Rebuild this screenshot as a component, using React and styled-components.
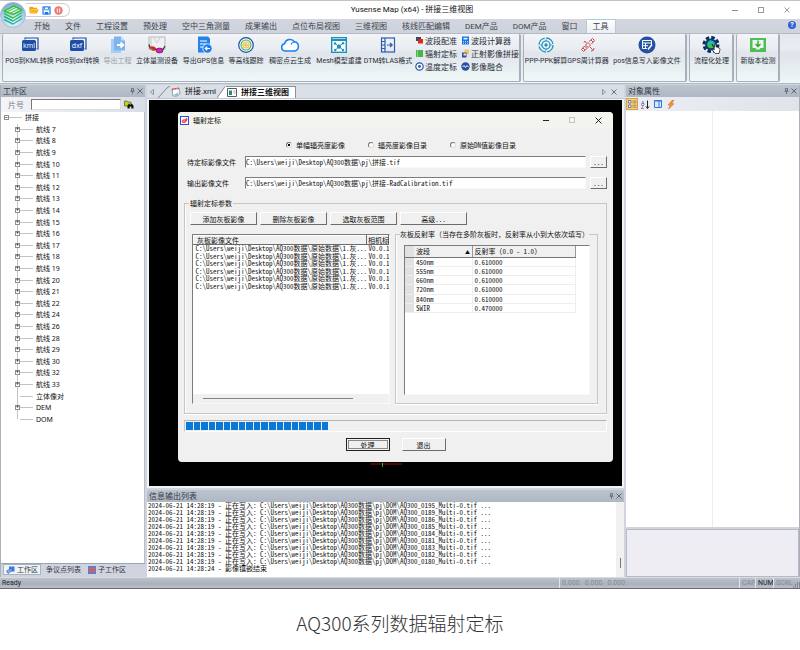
import React from "react";
import styled, { createGlobalStyle, css } from "styled-components";

const menus = [
  "开始", "文件", "工程设置", "预处理", "空中三角测量", "成果输出", "点位布局视图",
  "三维视图", "核线匹配编辑", "DEM产品", "DOM产品", "窗口", "工具",
];

const lines = [7, 8, 9, 10, 11, 12, 13, 14, 15, 16, 17, 18, 19, 20, 21, 22, 24, 26, 28, 29, 30, 32, 33];

const treeItems = [
  ...lines.map((n) => ({ name: `航线 ${n}`, open: true })),
  { name: "立体像对", open: false },
  { name: "DEM", open: true },
  { name: "DOM", open: false },
];

const logs = ["0195", "0189", "0186", "0185", "0184", "0181", "0183", "0182", "0180"];

const bands = [
  ["450nm", "0.610000"],
  ["555nm", "0.610000"],
  ["660nm", "0.610000"],
  ["720nm", "0.610000"],
  ["840nm", "0.610000"],
  ["SWIR", "0.470000"],
];

/* icons */

const Logo = () => (
  <svg width="26" height="26" viewBox="0 0 26 26">
    <defs>
      <radialGradient id="orb" cx="50%" cy="75%" r="70%">
        <stop offset="0" stopColor="#eef8ff" />
        <stop offset="0.7" stopColor="#a9cdea" />
        <stop offset="1" stopColor="#7fa9d0" />
      </radialGradient>
    </defs>
    <circle cx="13" cy="13" r="12.5" fill="url(#orb)" stroke="#a8bdd3" />
    <g fill="none" strokeWidth="1.4" strokeLinejoin="round">
      <path d="M4 17.500 13 22 22 16.500" stroke="#23b6a4" />
      <path d="M4 14.500 13 19 22 13.500" stroke="#22b573" />
      <path d="M4 11.500 13 16 22 10.500" stroke="#2fc14f" />
      <path d="M4 9 14 4 22 8 13 12.500Z" stroke="#33bf3f" fill="#e6f6ee" />
      <path d="M7.500 9.500 16 5.500M10.500 11 19 7" stroke="#33bf3f" strokeWidth="1" />
    </g>
  </svg>
);

const Folder = () => (
  <svg width="10" height="8" viewBox="0 0 10 8">
    <path d="M0.500 7.500V0.700H3.500L4.500 1.700H8V3H2.500Z" fill="#f2a100" />
    <path d="M2.500 3.300H9.800L8 7.600H0.800Z" fill="#ffb31a" />
  </svg>
);

const Save = () => (
  <svg width="9" height="9" viewBox="0 0 9 9">
    <path d="M1 1H8V8H1Z" fill="#fff" stroke="#1479e8" strokeWidth="1.200" />
    <path d="M2.500 1H6.500V3.800H2.500Z" fill="#fff" stroke="#1479e8" strokeWidth="0.800" />
    <path d="M2.800 6H6.200V8.500H2.800Z" fill="#1479e8" />
  </svg>
);

const Pause = () => (
  <svg width="9" height="9" viewBox="0 0 9 9">
    <circle cx="4.500" cy="4.500" r="4.200" fill="#ef7672" />
    <path d="M3.300 2.500V6.500M5.700 2.500V6.500" stroke="#fff" />
  </svg>
);

const FileTag = ({ text }) => (
  <svg width="18" height="18" viewBox="0 0 18 18">
    <path d="M4 3.500V2H17V13H15.500" fill="none" stroke="#1d4fa8" strokeWidth="1.200" />
    <rect x="1" y="4" width="14" height="11" rx="1.500" fill="#1d4fa8" />
    <text x="8" y="12" fontSize="7" fill="#fff" textAnchor="middle" fontFamily="Open Sans, sans-serif">
      {text}
    </text>
  </svg>
);

const ExportProject = () => (
  <svg width="18" height="18" viewBox="0 0 18 18">
    <path d="M2 3H12V17H2Z" fill="#a8cdf6" />
    <path d="M5 0.500H12L16 4.500V14.500H5Z" fill="#7fb4f0" />
    <path d="M12 0.500V4.500H16Z" fill="#c6defa" />
    <path d="M8 9H14M11.500 6.500 14.200 9 11.500 11.500" stroke="#fff" strokeWidth="1.800" fill="none" />
  </svg>
);

const Stereo = () => (
  <svg width="18" height="18" viewBox="0 0 18 18">
    <rect x="1" y="1" width="16" height="12" fill="#eef0f2" stroke="#b5b8bd" />
    <path d="M3 2V10M6 2 9 7 12 2" stroke="#c6c9cf" fill="none" />
    <path d="M1 8.500 2 12 9 13.500 15 13.500 17 10" stroke="#333" fill="none" strokeWidth="1.200" />
    <ellipse cx="5" cy="12.500" rx="3.200" ry="2" fill="#e41b23" transform="rotate(18 5 12)" />
    <ellipse cx="11.500" cy="14.500" rx="3.500" ry="2.500" fill="#e01bc0" stroke="#222" strokeWidth="0.600" />
    <path d="M2 11.500 5 14.500" stroke="#36c46a" />
  </svg>
);

const ExportGps = () => (
  <svg width="18" height="18" viewBox="0 0 18 18">
    <path d="M3 0.500H13L15 2.500V16.500H3Z" fill="#2284ea" />
    <path d="M5 5H12M5 8H11M5 11H8" stroke="#fff" />
    <circle cx="12.500" cy="12.500" r="4.700" fill="#1d7ce6" stroke="#fff" strokeWidth="0.800" />
    <path d="M15 12.500H10.500M12.200 10.700 10.300 12.500 12.200 14.300" stroke="#fff" fill="none" strokeWidth="1.200" />
  </svg>
);

const Contour = () => (
  <svg width="18" height="18" viewBox="0 0 18 18" fill="none">
    <circle cx="9" cy="9" r="7.300" fill="#f4f8f4" stroke="#1d4fa8" strokeWidth="1.200" />
    <circle cx="9" cy="9" r="5" stroke="#40b86b" strokeWidth="1.100" />
    <circle cx="9" cy="9" r="3" stroke="#f1c232" strokeWidth="1.100" />
    <circle cx="9" cy="9" r="1.200" stroke="#e0a339" />
  </svg>
);

const Cloud = () => (
  <svg width="20" height="18" viewBox="0 0 20 18">
    <path
      d="M5 15A3.700 3.700 0 0 1 4.600 7.700 5.500 5.500 0 0 1 14.500 5.800 4.700 4.700 0 0 1 14.800 15Z"
      fill="#fff" stroke="#1683f0" strokeWidth="1.500"
    />
    <path d="M11 8.500A4 4 0 0 1 14.500 6" fill="none" stroke="#1683f0" strokeWidth="1.100" />
  </svg>
);

const Mesh = () => (
  <svg width="18" height="18" viewBox="0 0 18 18">
    <rect x="1.700" y="1.700" width="14.600" height="14.600" fill="#fff" stroke="#1b93b8" strokeWidth="1.400" />
    <path d="M1.500 4H16.500" stroke="#1b93b8" strokeWidth="2" />
    <path d="M9 10.500 5 7.500M9 10.500 13 7M9 10.500 5.500 14M9 10.500 13 14" stroke="#1b93b8" />
    <path d="M9 8.200 11 9.500V11.800L9 13 7 11.800V9.500Z" fill="#1b93b8" />
    <g fill="#1b93b8">
      <circle cx="5" cy="7.500" r="1.200" />
      <circle cx="13" cy="7.200" r="1.200" />
      <circle cx="5.200" cy="14" r="1.200" />
      <circle cx="13" cy="14" r="1.200" />
    </g>
  </svg>
);

const Dtm = () => (
  <svg width="18" height="18" viewBox="0 0 18 18" fill="none" stroke="#2c5cb0" strokeWidth="1.200">
    <rect x="2.500" y="2" width="13" height="14" />
    <path d="M6 2V16M2.500 5.500H6M2.500 9H6M2.500 12.500H6M8 9H13M11 7 13.200 9 11 11" />
  </svg>
);

const SmallIcon = ({ kind }) => (
  <svg width="9" height="9" viewBox="0 0 9 9">
    {kind === "align" && (
      <>
        <path d="M1 1H6V5H1Z" fill="#3a4a5a" />
        <path d="M3 3H8V7.500H3Z" fill="#e0271b" />
      </>
    )}
    {kind === "radiance" && (
      <>
        <path d="M1 1H8V8H1Z" fill="#45b649" />
        <path d="M2.500 1V8" stroke="#a6dba8" strokeWidth="0.700" />
      </>
    )}
    {kind === "temp" && (
      <>
        <circle cx="4.500" cy="4.500" r="3.700" fill="#fff" stroke="#2358a8" strokeWidth="1.200" />
        <circle cx="4.500" cy="4.500" r="1.400" fill="#2358a8" />
      </>
    )}
    {kind === "calc" && (
      <>
        <path d="M1 0.500H8V8.500H1Z" fill="#1772e0" />
        <path d="M2.500 1.800H6.500V3.500H2.500Z" fill="#e9f3ff" />
        <path d="M2 5.500H7M2 7.200H7" stroke="#bfe0ff" strokeDasharray="1 1" />
      </>
    )}
    {kind === "ortho" && (
      <>
        <path d="M3.500 0.500H8V5H3.500Z" fill="#f0c75a" />
        <path d="M1 3.500H5.500V8.500H1Z" fill="#31518c" />
        <path d="M2.500 4.500H5V6.500H2.500Z" fill="#dfe9f8" />
      </>
    )}
    {kind === "fusion" && (
      <>
        <circle cx="4.500" cy="4.500" r="4.200" fill="#2353a2" />
        <path d="M1.500 5 3 3.500 4.500 5.500 6 3.500 7.500 5" stroke="#fff" fill="none" />
      </>
    )}
  </svg>
);

const Ppk = () => (
  <svg width="18" height="18" viewBox="0 0 18 18" fill="none" stroke="#1a91c2">
    <circle cx="9" cy="9" r="7" strokeWidth="1.300" strokeDasharray="9.500 1.500" />
    <circle cx="9" cy="9" r="4" strokeWidth="1.200" />
    <circle cx="9" cy="9" r="1.200" fill="#1a91c2" />
    <path d="M9 3.500V5M9 13V14.500M3.500 9H5M13 9H14.500" />
  </svg>
);

const Satellite = () => (
  <svg width="18" height="18" viewBox="0 0 18 18" fill="none" stroke="#c8323a" strokeWidth="0.900">
    <path d="M6.500 9 9 6.500 11.500 9 9 11.500Z" />
    <path d="M10 5.500 13.500 2.500 15.500 4.500 12.500 8M2.500 13.500 5.500 10 8 12.500 4.500 15.500Z" />
    <path d="M12 4 14 6M4 12 6 14M5.500 5 7.500 7M5 6.500 6.500 5M11 11 13.500 13.500M12 15A3 3 0 0 0 15 12" />
  </svg>
);

const PosEdit = () => (
  <svg width="18" height="18" viewBox="0 0 18 18">
    <circle cx="9" cy="9" r="8.500" fill="#2352a5" />
    <path d="M4.500 4.500H13.500V9M4.500 4.500V12.500H9M4.500 7H13.500M4.500 9.700H10M7.500 7V12.500" stroke="#fff" fill="none" />
    <path d="M10 13.500 14 8.500" stroke="#fff" strokeWidth="1.500" />
  </svg>
);

const Process = () => (
  <svg width="20" height="18" viewBox="0 0 20 18">
    <circle cx="9" cy="8.500" r="7" fill="none" stroke="#0b2d5c" strokeWidth="3" strokeDasharray="3.500 2" />
    <circle cx="9" cy="8.500" r="6" fill="#0f3d73" />
    <circle cx="9" cy="8.500" r="3.800" fill="#3ac163" />
    <path d="M7 5.500A3.500 3.500 0 0 1 12 9" stroke="#1bb1e6" strokeWidth="1.600" fill="none" />
    <path
      d="M10 8 12.500 11.500V8.500Q13.500 7.500 14 9V11Q16 10.500 16.500 12 18 12 18 13.500L17 17.500H13L10.500 14Q10.500 12.500 12.500 13.500Z"
      fill="#fff" stroke="#111" strokeWidth="0.700"
    />
  </svg>
);

const Update = () => (
  <svg width="18" height="18" viewBox="0 0 18 18">
    <rect x="1" y="2" width="16" height="14" fill="#4fbf54" />
    <path d="M3.500 4H14.500V12H11.500L10.500 13.500H7.500L6.500 12H3.500Z" fill="#e9f8e8" />
    <path d="M9 4.500V10M6.500 8 9 10.500 11.500 8" stroke="#35a53c" strokeWidth="1.400" fill="none" />
  </svg>
);

const Pin = () => (
  <svg width="5" height="6" viewBox="0 0 5 6" fill="none" stroke="#5c6470" strokeWidth="0.800">
    <path d="M1.500 0.500H3.500V3H1.500ZM0.500 3.300H4.500M2.500 3.500V6" />
  </svg>
);

const Cross = ({ size = 6, color = "#4b525e" }) => (
  <svg width={size} height={size} viewBox="0 0 6 6">
    <path d="M0.500 0.500 5.500 5.500M5.500 0.500 0.500 5.500" stroke={color} strokeWidth="0.800" />
  </svg>
);

const Find = () => (
  <svg width="10" height="9" viewBox="0 0 10 9">
    <path d="M0.500 1H3L4 2H7V6H0.500Z" fill="#c7cf22" stroke="#454a12" strokeWidth="0.600" />
    <path d="M3.500 8.500V5.500L5 3.500 6.300 5 7.500 3.500 9.500 5.500V8.500H7.300V6.500H5.700V8.500Z" fill="#111" />
  </svg>
);

const XmlIcon = () => (
  <svg width="10" height="10" viewBox="0 0 10 10">
    <path d="M1 2 8 1 9 7 6 9H2Z" fill="#fff" stroke="#6b7c93" strokeWidth="0.700" />
    <path d="M1 2.500 8 1.500" stroke="#e5443b" strokeWidth="1.600" strokeDasharray="1 0.600" />
    <path d="M2.500 8 8 5 6 9Z" fill="#88b7dd" />
  </svg>
);

const ViewIcon = () => (
  <svg width="10" height="9" viewBox="0 0 10 9">
    <path d="M0.500 0.500H9.500V8.500H0.500Z" fill="#fff" stroke="#4f5f70" />
    <path d="M2 2.500H5V7H2Z" fill="#2d8a6b" />
    <path d="M6.500 3H8.500M6.500 5H8.500" stroke="#9aa" />
  </svg>
);

const DialogIcon = () => (
  <svg width="9" height="9" viewBox="0 0 9 9">
    <rect x="0.500" y="0.500" width="8" height="8" fill="#fff" stroke="#3a48d8" />
    <path d="M1.500 5.500Q3 2.500 5 3.500L7 1.500 7.500 4 5.500 6.500Q3 8 1.500 5.500Z" fill="#ee3f45" />
    <path d="M3 5.500 5 4.800" stroke="#fff" strokeWidth="0.700" />
  </svg>
);

const Cells = ({ color, line }) => (
  <svg width="8" height="8" viewBox="0 0 8 8">
    <rect width="8" height="8" fill={color} />
    <path d="M0 2.600H8M0 5.300H8M2.600 0V8M5.300 0V8" stroke={line} strokeWidth="0.900" />
  </svg>
);

const Categories = () => (
  <svg width="9" height="8" viewBox="0 0 9 8">
    <path d="M0.500 0.500H3V3H0.500ZM0.500 5H3V7.500H0.500Z" fill="#fff" stroke="#4a5f93" strokeWidth="0.800" />
    <path d="M4.500 1H8.500M4.500 2.800H8.500M4.500 5.300H8.500M4.500 7.200H8.500" stroke="#8a7348" strokeWidth="0.800" />
  </svg>
);

const WorkIcon = () => (
  <svg width="9" height="8" viewBox="0 0 9 8">
    <path d="M3 0.500H8.500V5.500H3Z" fill="#3d7ce0" />
    <path d="M0.500 5 5 2.500 6.500 4 2 7.500Z" fill="#8fb2ec" stroke="#2b4f9a" strokeWidth="0.600" />
  </svg>
);

const tools = [
  { label: "POS到KML转换", icon: <FileTag text="kml" />, width: 49 },
  { label: "POS到dxf转换", icon: <FileTag text="dxf" />, width: 47 },
  { label: "导出工程", icon: <ExportProject />, width: 33, dim: true },
  { label: "立体量测设备", icon: <Stereo />, width: 46 },
  { label: "导出GPS信息", icon: <ExportGps />, width: 47 },
  { label: "等高线跟踪", icon: <Contour />, width: 38 },
  { label: "稠密点云生成", icon: <Cloud />, width: 50 },
  { label: "Mesh模型重建", icon: <Mesh />, width: 48 },
  { label: "DTM转LAS格式", icon: <Dtm />, width: 50 },
];

const smallTools = [
  ["波段配准", "align"],
  ["波段计算器", "calc"],
  ["辐射定标", "radiance"],
  ["正射影像拼接", "ortho"],
  ["温度定标", "temp"],
  ["影像融合", "fusion"],
];

const Tool = ({ label, icon, width, dim }) => (
  <ToolButton $width={width} $dim={dim}>
    {icon}
    <span>{label}</span>
  </ToolButton>
);

const Ribbon = () => (
  <RibbonBar>
    <RibbonPanel>
      {tools.map((t) => (
        <Tool key={t.label} {...t} />
      ))}
      <SmallTools>
        {smallTools.map(([label, kind]) => (
          <SmallTool key={label}>
            <SmallIcon kind={kind} />
            {label}
          </SmallTool>
        ))}
      </SmallTools>
    </RibbonPanel>
    <RibbonPanel>
      <Tool label="PPP-PPK解算" icon={<Ppk />} width={42} />
      <Tool label="GPS周计算器" icon={<Satellite />} width={42} />
      <Tool label="pos信息写入影像文件" icon={<PosEdit />} width={76} />
    </RibbonPanel>
    <RibbonPanel>
      <Tool label="流程化处理" icon={<Process />} width={41} />
    </RibbonPanel>
    <RibbonPanel>
      <Tool label="新版本检测" icon={<Update />} width={40} />
    </RibbonPanel>
  </RibbonBar>
);

const PanelHead = ({ title }) => (
  <PanelTitle>
    <h2>{title}</h2>
    <IconButton aria-label="固定"><Pin /></IconButton>
    <IconButton aria-label="关闭"><Cross /></IconButton>
  </PanelTitle>
);

const Workspace = () => (
  <Side>
    <PanelHead title="工作区" />
    <SearchRow>
      <label htmlFor="sheet">片号</label>
      <input id="sheet" />
      <IconButton aria-label="查找"><Find /></IconButton>
    </SearchRow>
    <TreeBox>
      <Tree>
        <Root>
          <Toggle aria-label="折叠">−</Toggle>
          <Dots />
          拼接
        </Root>
        {treeItems.map((item) => (
          <Node key={item.name}>
            {item.open ? <Toggle aria-label="展开">+</Toggle> : <Stub />}
            <Dots />
            {item.name}
          </Node>
        ))}
      </Tree>
    </TreeBox>
    <SideTabs>
      <SideTab $active><WorkIcon />工作区</SideTab>
      <SideTab>争议点列表</SideTab>
      <SideTab><Cells color="#4f7fd6" line="#ee5a4f" />子工作区</SideTab>
    </SideTabs>
  </Side>
);

const plate = "C:\\Users\\weiji\\Desktop\\AQ300数据\\原始数据\\1.灰...";

const CalibrationDialog = () => (
  <Dialog role="dialog" aria-labelledby="dialog-title">
    <DialogBar>
      <DialogIcon />
      <h3 id="dialog-title">辐射定标</h3>
      <WinButton aria-label="最小化">
        <svg width="7" height="7" viewBox="0 0 7 7"><path d="M0 3.500H6" stroke="#222" /></svg>
      </WinButton>
      <WinButton aria-label="最大化" disabled>
        <svg width="7" height="7" viewBox="0 0 7 7"><rect x="0.500" y="0.500" width="5" height="5" fill="none" stroke="#c4c4c0" /></svg>
      </WinButton>
      <WinButton aria-label="关闭"><Cross size={7} color="#111" /></WinButton>
    </DialogBar>
    <DialogBody>
      <Radios>
        <label><input type="radio" name="mode" defaultChecked />单幅辐亮度影像</label>
        <label><input type="radio" name="mode" />辐亮度影像目录</label>
        <label><input type="radio" name="mode" />原始DN值影像目录</label>
      </Radios>
      <Field>
        <label htmlFor="source">待定标影像文件</label>
        <input id="source" defaultValue={"C:\\Users\\weiji\\Desktop\\AQ300数据\\pj\\拼接.tif"} />
        <Button>...</Button>
      </Field>
      <Field>
        <label htmlFor="target">输出影像文件</label>
        <input id="target" defaultValue={"C:\\Users\\weiji\\Desktop\\AQ300数据\\pj\\拼接-RadCalibration.tif"} />
        <Button>...</Button>
      </Field>
      <Group>
        <legend>辐射定标参数</legend>
        <Actions>
          <Button>添加灰板影像</Button>
          <Button>删除灰板影像</Button>
          <Button>选取灰板范围</Button>
          <Button>高级...</Button>
        </Actions>
        <Columns>
          <ListBox>
            <PlateTable>
              <thead>
                <tr><th>灰板影像文件</th><th>相机标</th></tr>
              </thead>
              <tbody>
                {bands.map(([band]) => (
                  <tr key={band}><td>{plate}</td><td>V0.0.1</td></tr>
                ))}
              </tbody>
            </PlateTable>
            <ScrollX />
          </ListBox>
          <InnerGroup>
            <legend>灰板反射率（当存在多阶灰板时，反射率从小到大依次填写）</legend>
            <BandBox>
              <BandTable>
                <thead>
                  <tr>
                    <th />
                    <th><span>波段</span><i>▲</i></th>
                    <th>反射率 (0.0 - 1.0)</th>
                  </tr>
                </thead>
                <tbody>
                  {bands.map(([band, value]) => (
                    <tr key={band}><td /><td>{band}</td><td>{value}</td></tr>
                  ))}
                </tbody>
              </BandTable>
            </BandBox>
          </InnerGroup>
        </Columns>
      </Group>
      <Progress role="progressbar" aria-valuenow={34} aria-valuemin={0} aria-valuemax={100}>
        <Blocks style={{ width: "34%" }}>
          {Array.from({ length: 19 }, (_, i) => <span key={i} />)}
        </Blocks>
      </Progress>
      <DialogFooter>
        <Button $primary>处理</Button>
        <Button>退出</Button>
      </DialogFooter>
    </DialogBody>
  </Dialog>
);

const App = () => {
  return (
    <Page>
      <GlobalStyle />
      <Window>
        <TitleBar>
          <Orb><Logo /></Orb>
          <Quick>
            <IconButton aria-label="打开"><Folder /></IconButton>
            <IconButton aria-label="保存"><Save /></IconButton>
            <IconButton aria-label="暂停"><Pause /></IconButton>
          </Quick>
          <h1>Yusense Map (x64) - 拼接三维视图</h1>
          <WinButtons>
            <WinButton aria-label="最小化">
              <svg width="7" height="7" viewBox="0 0 7 7"><path d="M0 3.500H6" stroke="#888" /></svg>
            </WinButton>
            <WinButton aria-label="最大化">
              <svg width="7" height="7" viewBox="0 0 7 7"><rect x="0.500" y="0.500" width="5" height="5" fill="none" stroke="#999" /></svg>
            </WinButton>
            <WinButton aria-label="关闭"><Cross color="#888" /></WinButton>
          </WinButtons>
        </TitleBar>
        <MenuBar>
          {menus.map((m) => (
            <MenuTab key={m} $active={m === "工具"}>{m}</MenuTab>
          ))}
          <Help aria-label="帮助">?</Help>
        </MenuBar>
        <Ribbon />
        <Main>
          <Workspace />
          <Center>
            <DocTabs>
              <IconButton aria-label="上一个">
                <svg width="4" height="6" viewBox="0 0 4 6"><path d="M3.500 0.500V5.500L0.500 3Z" fill="none" stroke="#777" strokeWidth="0.700" /></svg>
              </IconButton>
              <svg width="12" height="12" viewBox="0 0 12 12"><path d="M0 12 9 2Q10 0.500 12 0.500" fill="none" stroke="#7f8793" /></svg>
              <DocTab><XmlIcon />拼接.xml</DocTab>
              <svg width="9" height="12" viewBox="0 0 9 12"><path d="M0 12 8 0.500H9V12Z" fill="#fff" /><path d="M0 12 8 0.500" stroke="#7f8793" /></svg>
              <DocTab $active><ViewIcon />拼接三维视图</DocTab>
              <Spacer />
              <IconButton aria-label="下一个">
                <svg width="4" height="6" viewBox="0 0 4 6"><path d="M0.500 0.500V5.500L3.500 3Z" fill="none" stroke="#777" strokeWidth="0.700" /></svg>
              </IconButton>
              <IconButton aria-label="关闭"><Cross /></IconButton>
            </DocTabs>
            <Canvas>
              <CalibrationDialog />
              <Axis width="32" height="5" viewBox="0 0 32 5">
                <path d="M0 1H32" stroke="#8d1010" />
                <path d="M12.500 0V4" stroke="#19c32a" />
              </Axis>
            </Canvas>
            <Log>
              <PanelHead title="信息输出列表" />
              <LogBody>
                <LogLines>
                  {logs.map((n) => (
                    <li key={n}>
                      {`2024-06-21 14:28:19 - 正在写入: C:\\Users\\weiji\\Desktop\\AQ300数据\\pj\\DOM\\AQ300_${n}_Multi-0.tif ...`}
                    </li>
                  ))}
                  <li>2024-06-21 14:28:24 - 影像镶嵌结束</li>
                </LogLines>
                <ScrollY />
              </LogBody>
            </Log>
          </Center>
          <Properties>
            <PanelHead title="对象属性" />
            <PropTools>
              <PropButton aria-label="分类" $active><Categories /></PropButton>
              <PropButton aria-label="排序">
                <svg width="9" height="9" viewBox="0 0 9 9">
                  <text x="0" y="4.500" fontSize="5" fill="#2244cc" fontFamily="Liberation Sans, sans-serif">A</text>
                  <text x="0" y="9" fontSize="5" fill="#aa2222" fontFamily="Liberation Sans, sans-serif">Z</text>
                  <path d="M6.500 0.500V8M5 6.500 6.500 8.500 8 6.500" stroke="#222" fill="none" />
                </svg>
              </PropButton>
              <PropButton aria-label="页面">
                <svg width="8" height="8" viewBox="0 0 8 8">
                  <path d="M0.500 0.500H7.500V7.500H0.500Z" fill="#dce9fb" stroke="#3b73cf" />
                  <path d="M0 1H8M5 1V8" stroke="#3b73cf" />
                </svg>
              </PropButton>
              <PropButton aria-label="事件">
                <svg width="8" height="9" viewBox="0 0 8 9"><path d="M5.500 0 1 5H3.500L1.500 9 7 3.700H4.500L7 0Z" fill="#f5a21b" stroke="#c84f12" strokeWidth="0.500" /></svg>
              </PropButton>
            </PropTools>
            <PropGrid><span /><span /></PropGrid>
            <PropHint />
          </Properties>
        </Main>
        <StatusBar>
          <StatusText>Ready</StatusText>
          <StatusCell $width={180}>0.000&nbsp;&nbsp;&nbsp;0.000&nbsp;&nbsp;&nbsp;0.000</StatusCell>
          <StatusCell $width={16}>CAP</StatusCell>
          <StatusCell $width={18} $on>NUM</StatusCell>
          <StatusCell $width={18}>SCRL</StatusCell>
          <svg width="9" height="9" viewBox="0 0 9 9">
            <path d="M2 8H9M4 6H9M6 4H9" stroke="#59606c" strokeDasharray="1 1" />
          </svg>
        </StatusBar>
      </Window>
      <Caption>AQ300系列数据辐射定标</Caption>
    </Page>
  );
};

export default App;

const uiFont = `"Noto Sans", "Noto Sans CJK SC", sans-serif`;
const narrowFont = `Roboto, "Noto Sans CJK SC", sans-serif`;
const monoFont = `"Noto Sans Mono CJK SC", "Liberation Mono", "Noto Sans CJK SC", monospace`;

const GlobalStyle = createGlobalStyle`
  * {
    box-sizing: border-box;
  }
  body {
    margin: 0;
    background: #fff;
    font-family: ${uiFont};
    color: #1c1f24;
  }
  button, input {
    font: inherit;
    color: inherit;
    margin: 0;
    padding: 0;
  }
  button {
    border: 0;
    background: none;
    white-space: nowrap;
  }
  h1, h2, h3, ul {
    margin: 0;
    padding: 0;
    font-size: inherit;
    font-weight: 400;
    list-style: none;
  }
  svg {
    display: block;
    flex: none;
  }
`;

const raised = css`
  background: #f0f0f0;
  border: 1px solid;
  border-color: #fff #6c6c6c #6c6c6c #fff;
`;

const sunken = css`
  background: #fff;
  border: 1px solid;
  border-color: #7c7c7c #f8f8f8 #f8f8f8 #7c7c7c;
`;

const Page = styled.div`
  min-height: 100vh;
  display: flex;
  flex-direction: column;
`;

const Window = styled.div`
  flex: 1;
  display: flex;
  flex-direction: column;
  background: #cfd4de;
  border-top: 1px solid #c4c4c4;
  border-bottom: 1px solid #6f6a70;
  font-size: 8px;
  line-height: 10px;
`;

const TitleBar = styled.header`
  position: relative;
  display: flex;
  align-items: center;
  height: 18px;
  background: #fff;
  h1 {
    flex: 1;
    padding-left: 32px;
    text-align: center;
    font-family: ${narrowFont};
    color: #111;
  }
`;

const Orb = styled.div`
  position: absolute;
  left: 0;
  top: 1px;
  z-index: 2;
`;

const Quick = styled.div`
  display: flex;
  align-items: center;
  gap: 3px;
  height: 14px;
  width: 44px;
  margin-left: 26px;
  padding-left: 3px;
  border: 1px solid #ccd0d6;
  border-left: 0;
  border-radius: 0 7px 7px 0;
`;

const IconButton = styled.button`
  display: flex;
  align-items: center;
  justify-content: center;
  min-width: 8px;
`;

const WinButtons = styled.div`
  display: flex;
`;

const WinButton = styled.button`
  display: flex;
  align-items: center;
  justify-content: center;
  width: 26px;
  height: 14px;
`;

const MenuBar = styled.nav`
  display: flex;
  gap: 3px;
  height: 14px;
  padding-left: 28px;
  background: linear-gradient(#d3d6de, #cdd2dc);
  color: #3c424c;
  font-family: ${narrowFont};
`;

const MenuTab = styled.button`
  padding: 0 6px;
  border: 1px solid transparent;
  border-width: 1px 0 0;
  ${(p) =>
    p.$active &&
    css`
      background: linear-gradient(#fff, #e9f0f3);
      border-color: #9fd0dc;
      box-shadow: 0 0 1px #7d8591;
    `}
`;

const Help = styled.button`
  width: 8px;
  height: 8px;
  margin: 2px 4px 0 auto;
  border-radius: 50%;
  background: #2d62d8;
  color: #fff;
  font-size: 7px;
  font-weight: 700;
  line-height: 8px;
`;

const RibbonBar = styled.div`
  display: flex;
  gap: 2px;
  height: 51px;
  padding: 0 2px 1px;
  border: 1px solid #b3bac3;
  border-width: 1px 0;
  background: linear-gradient(#e4e8ed, #e9edf1 30%, #dfe4ea 40%, #eff6f6);
`;

const RibbonPanel = styled.div`
  flex: none;
  display: flex;
  padding-left: 1px;
  border: 1px solid #a9afb8;
  border-width: 0 2px 1px 1px;
  border-radius: 2px;
  background: linear-gradient(#f3f5f8, #e9edf1 30%, #e0e5eb 42%, #f0f8f7);
  &:first-child {
    padding-left: 2px;
  }
`;

const ToolButton = styled.button`
  display: flex;
  flex-direction: column;
  align-items: center;
  gap: 2px;
  width: ${(p) => p.$width}px;
  padding-top: 2px;
  font-family: ${narrowFont};
  font-size: 7px;
  line-height: 10px;
  color: ${(p) => (p.$dim ? "#989da5" : "#2a2f37")};
`;

const SmallTools = styled.div`
  display: grid;
  grid-template-columns: 46px 58px;
  grid-auto-rows: 13px;
  padding: 1px 0 0 2px;
`;

const SmallTool = styled.button`
  display: flex;
  align-items: center;
  gap: 1px;
  height: 11px;
  color: #2a2f37;
`;

const Main = styled.main`
  flex: 1;
  display: grid;
  grid-template-columns: 145px minmax(0, 1fr) 174px;
  gap: 2px;
  padding-top: 1px;
`;

const Side = styled.section`
  display: flex;
  flex-direction: column;
  border-left: 1px solid #aab1bc;
`;

const PanelTitle = styled.div`
  display: flex;
  align-items: center;
  height: 12px;
  padding: 0 1px 0 2px;
  background: linear-gradient(#bcc4ce, #aeb7c3);
  color: #343a44;
  h2 {
    flex: 1;
    line-height: 12px;
  }
`;

const SearchRow = styled.div`
  display: flex;
  align-items: center;
  gap: 7px;
  height: 15px;
  padding-left: 7px;
  background: linear-gradient(90deg, #f4f5f8, #d9dde6);
  color: #777c85;
  input {
    width: 90px;
    height: 11px;
    margin-right: -4px;
    border: 1px solid #a9a9a9;
    border-color: #777 #ddd #ddd #777;
    background: #fff;
  }
`;

const TreeBox = styled.div`
  flex: 1;
  background: #fff;
  border-right: 1px solid #b7bec9;
`;

const Tree = styled.ul`
  display: grid;
  grid-auto-rows: 1fr;
  height: 313px;
  font-size: 7px;
  line-height: 11px;
  color: #111;
`;

const Root = styled.li`
  display: flex;
  align-items: center;
  padding-left: 3px;
`;

const Node = styled.li`
  display: flex;
  align-items: center;
  padding-left: 14px;
  background: linear-gradient(#c4c4c4, #c4c4c4) 16px 0 / 1px 100% no-repeat;
  &:last-child {
    background-size: 1px 50%;
  }
`;

const Toggle = styled.button`
  width: 5px;
  height: 5px;
  border: 1px solid #8d8d8d;
  background: #fff;
  font-size: 5px;
  line-height: 3px;
  font-weight: 700;
  display: flex;
  align-items: center;
  justify-content: center;
`;

const Stub = styled.span`
  width: 5px;
`;

const Dots = styled.span`
  width: 13px;
  margin-right: 3px;
  border-top: 1px solid #c4c4c4;
`;

const SideTabs = styled.div`
  display: flex;
  align-items: center;
  gap: 3px;
  height: 14px;
  padding: 0 0 2px 2px;
  border-top: 1px solid #9aa3b0;
  font-size: 7px;
`;

const SideTab = styled.button`
  display: flex;
  align-items: center;
  gap: 2px;
  height: 11px;
  padding: 0 2px;
  color: #343a44;
  ${(p) =>
    p.$active &&
    css`
      background: #eef3f6;
      border: 1px solid #a9b2bf;
    `}
`;

const Center = styled.section`
  display: flex;
  flex-direction: column;
  min-width: 0;
`;

const DocTabs = styled.div`
  display: flex;
  align-items: flex-end;
  height: 14px;
  padding: 0 4px 0 1px;
  background: #dadee6;
  border-bottom: 1px solid #c3c8d0;
  font-family: ${narrowFont};
  ${IconButton} {
    height: 12px;
    margin-right: 2px;
  }
`;

const DocTab = styled.button`
  display: flex;
  align-items: center;
  gap: 4px;
  height: 12px;
  padding: 0 1px;
  color: #111;
  ${(p) =>
    p.$active &&
    css`
      background: #fff;
      font-weight: 700;
      padding-right: 6px;
      border-top: 1px solid #8a919c;
      border-right: 1px solid #8a919c;
    `}
`;

const Spacer = styled.span`
  flex: 1;
`;

const Canvas = styled.div`
  position: relative;
  flex: 1;
  background: #000;
  border: 1px solid #f2f4f7;
  border-width: 1px 2px 2px;
`;

const Axis = styled.svg`
  position: absolute;
  left: 221px;
  bottom: 18px;
`;

const Dialog = styled.div`
  position: absolute;
  inset: 12px 9px 24px 29px;
  display: flex;
  flex-direction: column;
  background: #f0f0f0;
  border-radius: 4px;
  font-family: ${monoFont};
  font-size: 7px;
  line-height: 9px;
  color: #111;
`;

const DialogBar = styled.div`
  display: flex;
  align-items: center;
  gap: 4px;
  height: 16px;
  padding-left: 2px;
  border-radius: 4px 4px 0 0;
  background: #f4f4ee;
  h3 {
    flex: 1;
  }
  ${WinButton} {
    width: 22px;
  }
  ${WinButton}:last-child {
    margin-right: 4px;
  }
`;

const DialogBody = styled.div`
  flex: 1;
  display: flex;
  flex-direction: column;
  padding: 12px 6px 11px;
`;

const Radios = styled.div`
  display: flex;
  gap: 23px;
  padding-left: 102px;
  label {
    display: flex;
    align-items: center;
    gap: 4px;
    height: 10px;
  }
  input {
    appearance: none;
    width: 6px;
    height: 6px;
    border: 1px solid #777;
    border-color: #777 #ddd #ddd #777;
    border-radius: 50%;
    background: #fff;
    display: grid;
    place-items: center;
  }
  input:checked::after {
    content: "";
    width: 2px;
    height: 2px;
    background: #000;
  }
`;

const Button = styled.button`
  ${raised}
  height: 13px;
  line-height: 10px;
  ${(p) =>
    p.$primary &&
    css`
      border: 1px solid #222;
      outline: 1px solid #8a8a8a;
      outline-offset: -3px;
    `}
`;

const Field = styled.div`
  display: flex;
  align-items: center;
  height: 13px;
  margin: 5px 0 3px 3px;
  label {
    width: 58px;
    padding-top: 2px;
  }
  input {
    ${sunken}
    flex: 1;
    min-width: 0;
    height: 12px;
  }
  ${Button} {
    width: 17px;
    height: 12px;
    margin-left: 4px;
  }
`;

const Group = styled.fieldset`
  flex: 1;
  display: flex;
  flex-direction: column;
  min-width: 0;
  margin: 7px 0 6px;
  padding: 4px 8px 9px 5px;
  border: 1px solid #c6c6c6;
  box-shadow: inset 1px 0 #fff, 0 1px #fff;
  legend {
    padding: 0 1px;
    margin-left: -1px;
  }
`;

const Actions = styled.div`
  display: flex;
  gap: 3px;
  ${Button} {
    width: 67px;
  }
`;

const Columns = styled.div`
  flex: 1;
  display: flex;
  gap: 5px;
  padding: 5px 0 0 2px;
`;

const ListBox = styled.div`
  ${sunken}
  display: flex;
  flex-direction: column;
  justify-content: space-between;
  flex: 1;
  min-width: 0;
  margin-top: 4px;
  overflow: hidden;
`;

const PlateTable = styled.table`
  width: 100%;
  height: 55px;
  border-collapse: collapse;
  table-layout: fixed;
  line-height: 7px;
  white-space: nowrap;
  th {
    ${raised}
    height: 9px;
    padding: 0 3px;
    font-weight: 400;
    text-align: left;
  }
  th:last-child {
    width: 22px;
    padding: 0 1px;
  }
  td {
    padding: 0 2px;
  }
`;

const ScrollX = styled.div`
  height: 9px;
  padding: 4px 36px 4px 10px;
  background: #f0f0f0;
  &::before {
    content: "";
    display: block;
    height: 1px;
    background: #858585;
  }
`;

const InnerGroup = styled(Group)`
  flex: none;
  width: 203px;
  margin: 0;
  padding: 6px 7px 8px 8px;
  legend {
    padding: 0;
    margin-left: -4px;
  }
`;

const BandBox = styled.div`
  ${sunken}
  flex: 1;
`;

const BandTable = styled.table`
  width: 171px;
  height: 67px;
  border-collapse: collapse;
  table-layout: fixed;
  line-height: 8px;
  white-space: nowrap;
  th,
  td {
    padding: 0 0 0 2px;
    text-align: left;
    font-weight: 400;
  }
  th {
    height: 11px;
    background: #f0f0f0;
    border-bottom: 1px solid #777;
    border-right: 1px solid #999;
  }
  th:first-child,
  td:first-child {
    width: 9px;
    background: #e1e1e1;
    border-right: 0;
  }
  th:nth-child(2) {
    width: 58px;
    span {
      display: inline-block;
      width: 49px;
    }
    i {
      font-style: normal;
      font-size: 5px;
    }
  }
  td {
    border: 1px solid #eee;
    border-width: 0 1px 1px 0;
  }
`;

const Progress = styled.div`
  height: 12px;
  padding: 1px;
  border: 1px solid;
  border-color: #b5b5b5 #fff #fff #c4c4c4;
`;

const Blocks = styled.div`
  display: flex;
  gap: 1px;
  height: 100%;
  span {
    flex: 1;
    background: #0a78d7;
  }
`;

const DialogFooter = styled.div`
  display: flex;
  justify-content: center;
  gap: 12px;
  margin-top: 6px;
  ${Button} {
    width: 44px;
  }
`;

const Log = styled.section`
  display: flex;
  flex-direction: column;
  height: 87px;
  margin-top: 2px;
`;

const LogBody = styled.div`
  flex: 1;
  display: flex;
  background: #fff;
`;

const LogLines = styled.ul`
  flex: 1;
  min-width: 0;
  padding: 0 0 0 1px;
  white-space: nowrap;
  font-family: ${monoFont};
  font-size: 7px;
  line-height: 7px;
  color: #111;
`;

const ScrollY = styled.div`
  display: flex;
  flex-direction: column;
  justify-content: flex-end;
  align-items: center;
  width: 8px;
  padding-bottom: 9px;
  background: #f0f0f0;
  &::after {
    content: "";
    width: 1px;
    height: 10px;
    background: #777;
  }
`;

const Properties = styled.section`
  display: flex;
  flex-direction: column;
  border-right: 1px solid #aab1bc;
`;

const PropTools = styled.div`
  display: flex;
  align-items: center;
  gap: 1px;
  height: 14px;
  background: linear-gradient(90deg, #eceff4, #dfe3ea);
`;

const PropButton = styled.button`
  display: flex;
  align-items: center;
  justify-content: center;
  width: 12px;
  height: 12px;
  ${(p) =>
    p.$active &&
    css`
      background: #fbcf7b;
      border: 1px solid #d3a34b;
    `}
`;

const PropGrid = styled.div`
  flex: 1;
  display: grid;
  grid-template-columns: 1fr 1fr;
  margin-bottom: 2px;
  background: #fff;
  span:first-child {
    border-right: 1px solid #ececf0;
  }
`;

const PropHint = styled.div`
  height: 48px;
  border: 1px solid #b5bac6;
  background: #ededf3;
`;

const StatusBar = styled.footer`
  display: flex;
  align-items: center;
  height: 11px;
  border-top: 1px solid #d7dbe2;
  background: linear-gradient(#bcc3cc, #a9b1bc 60%, #b9c0c9);
  font-family: ${narrowFont};
  font-size: 7px;
  color: #22262d;
`;

const StatusText = styled.span`
  flex: 1;
  padding-left: 2px;
`;

const StatusCell = styled.span`
  width: ${(p) => p.$width}px;
  padding-left: 2px;
  border-left: 1px solid #e2e5ea;
  white-space: nowrap;
  color: ${(p) => (p.$on ? "#22262d" : "#858c96")};
`;

const Caption = styled.p`
  margin: 0;
  padding: 21px 0 14px;
  text-align: center;
  font-family: "Noto Sans CJK SC", sans-serif;
  font-size: 19px;
  font-weight: 300;
  line-height: 26px;
  color: #333;
`;
